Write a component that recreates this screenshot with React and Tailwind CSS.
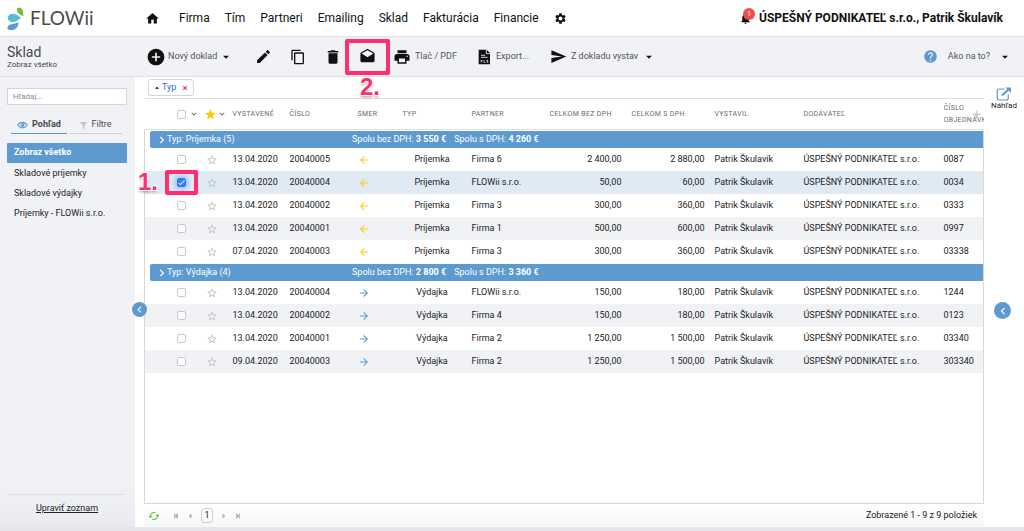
import React, { useState } from 'react';
import {
    MdHome, MdSettings, MdAddCircle, MdEdit, MdContentCopy, MdDelete, MdDrafts, MdPrint, MdSend,
    MdNotifications, MdHelp, MdStar, MdStarBorder, MdArrowBack, MdArrowForward, MdArrowDropDown,
    MdArrowDropUp, MdChevronLeft, MdCheck, MdKeyboardArrowDown, MdLoop,
} from 'react-icons/md';
import { FaFilter, FaChevronRight, FaStepBackward, FaStepForward, FaCaretLeft, FaCaretRight, FaTimes, FaPlus } from 'react-icons/fa';

const NAV = ['Firma', 'Tím', 'Partneri', 'Emailing', 'Sklad', 'Fakturácia', 'Financie'];

const VIEWS = ['Zobraz všetko', 'Skladové príjemky', 'Skladové výdajky', 'Príjemky - FLOWii s.r.o.'];

const GROUPS = [
    {
        title: 'Typ: Príjemka (5)',
        type: 'Príjemka',
        net: '3 550 €',
        gross: '4 260 €',
        rows: [
            ['13.04.2020', '20040005', 'Firma 6', '2 400,00', '2 880,00', '0087'],
            ['13.04.2020', '20040004', 'FLOWii s.r.o.', '50,00', '60,00', '0034'],
            ['13.04.2020', '20040002', 'Firma 3', '300,00', '360,00', '0333'],
            ['13.04.2020', '20040001', 'Firma 1', '500,00', '600,00', '0997'],
            ['07.04.2020', '20040003', 'Firma 3', '300,00', '360,00', '03338'],
        ],
    },
    {
        title: 'Typ: Výdajka (4)',
        type: 'Výdajka',
        net: '2 800 €',
        gross: '3 360 €',
        rows: [
            ['13.04.2020', '20040004', 'FLOWii s.r.o.', '150,00', '180,00', '1244'],
            ['13.04.2020', '20040002', 'Firma 4', '150,00', '180,00', '0123'],
            ['13.04.2020', '20040001', 'Firma 2', '1 250,00', '1 500,00', '03340'],
            ['09.04.2020', '20040003', 'Firma 2', '1 250,00', '1 500,00', '303340'],
        ],
    },
];

const Logo = () => (
    <a href="#" className="flex items-center gap-[5px] text-[#4a4a4c]">
        <svg width="18" height="24" viewBox="0 0 18 24">
            <path d="M10.300 2.200C12 .8 14.500 1.200 15.500 4c.7 2.200.8 4.500 1 6.300C13.500 8.800 8.500 6.200 10.300 2.200z" fill="#6abf3b" />
            <path d="M.6 11.500C1.500 8 5.500 6.600 9 8.600c2 1.200 3.500 2.300 5.400 3.400-2.800 1.200-4.600 3.400-7.400 4C3.500 16.700 1 14.800.6 11.500z" fill="#57bccf" />
            <path d="M.4 22.500c0-2.800 1.500-4 4-4.300 2.200-.3 4.500-.6 7-2.200 0 2.300-.5 4.500-1.800 6-1.500 1.600-3.300 2-5.200 2-1.500 0-4-.3-4-1.500z" fill="#5c9ad0" />
        </svg>
        <span className="font-[Lato,sans-serif] text-[19px] leading-6">FLOWii</span>
    </a>
);

const Callout = ({ box, label, text }) => (
    <>
        <span className={`absolute border-4 border-[#fe2e6f] rounded-[2px] pointer-events-none z-10 ${box}`} />
        <span
            className={`absolute z-10 pointer-events-none font-['Liberation_Sans',sans-serif] font-bold text-[24px] leading-5 text-[#fe2e6f] [text-shadow:1px_1px_0_#fff,-1px_1px_0_#fff,1px_-1px_0_#fff,-1px_-1px_0_#fff,0_2px_3px_#999] ${label}`}
        >
            {text}
        </span>
    </>
);

const ToolButton = ({ icon: Icon, size = 17, children, caret, className = '' }) => (
    <button type="button" className={`relative flex items-center gap-1 text-[9px] text-[#55565a] whitespace-nowrap ${className}`}>
        <Icon size={size} color="#111" className="shrink-0" />
        {children}
        {caret && <MdArrowDropDown size={14} color="#111" className="shrink-0" />}
    </button>
);

const XlsIcon = ({ size, className }) => (
    <svg width={size} height={size} viewBox="0 0 24 24" className={className}>
        <path d="M4 1h12l5 5v17H4z" fill="#111" />
        <path d="M15.500 1.500V7H21M7.500 9.500h6M7.500 12.500h10" stroke="#f1f2f6" strokeWidth="1.300" fill="none" />
        <path d="M7 16.500l2.500 3.500m0-3.500L7 20M12 16.500V20h2M18 16.800h-1.800v1.500H18V20h-2" stroke="#f1f2f6" strokeWidth="1" fill="none" />
    </svg>
);

const EyeIcon = () => (
    <svg width="11" height="8" viewBox="0 0 22 16" fill="none">
        <path d="M1.500 8C6 .5 16 .5 20.500 8 16 15.500 6 15.500 1.500 8z" stroke="#5c9ad0" strokeWidth="2.200" />
        <circle cx="11" cy="7.500" r="4.300" fill="#5c9ad0" />
        <circle cx="9.800" cy="6" r="1.400" fill="#f1f2f6" />
    </svg>
);

const PreviewIcon = () => (
    <svg width="16" height="14" viewBox="0 0 32 28" fill="none" stroke="#5c9ad0">
        <path d="M17 4H6a3.500 3.500 0 0 0-3.500 3.500v15A3.500 3.500 0 0 0 6 26h15a3.500 3.500 0 0 0 3.500-3.500V15" strokeWidth="2.400" />
        <path d="M12 17L26 4" strokeWidth="4" />
        <path d="M19 1h11v11z" fill="#5c9ad0" stroke="none" />
    </svg>
);

const CheckBox = ({ checked, onChange, label }) => (
    <span className={`relative flex w-[9px] h-[9px] ${checked ? 'shadow-[0_0_4px_3px_#a9cdf8] rounded-[2px]' : ''}`}>
        <input
            type="checkbox"
            aria-label={label}
            checked={checked}
            onChange={onChange}
            className="appearance-none w-[9px] h-[9px] rounded-[2px] border border-[#c9c9cc] bg-white checked:bg-[#2f7cf6] checked:border-[#2f7cf6]"
        />
        {checked && <MdCheck size={9} color="#fff" className="absolute inset-0 pointer-events-none" />}
    </span>
);

const Header = () => (
    <header className="flex items-center h-9 pl-[7px] pr-[21px] bg-white">
        <div className="w-[138px] shrink-0"><Logo /></div>
        <nav className="flex items-center gap-[15px] text-[12px] text-[#111]">
            <a href="#" aria-label="Domov" className="mr-1"><MdHome size={15} /></a>
            {NAV.map((item) => <a key={item} href="#">{item}</a>)}
            <a href="#" aria-label="Nastavenia"><MdSettings size={13} /></a>
        </nav>
        <div className="flex items-center gap-1 ml-auto">
            <button type="button" aria-label="Upozornenia" className="relative w-4">
                <MdNotifications size={13} color="#111" />
                <span className="absolute -top-1 left-1 w-3 h-3 rounded-full bg-[#ee4e4e] text-white text-[8px] leading-3 text-center">1</span>
            </button>
            <a href="#" className="text-[12px] font-bold text-[#111]">ÚSPEŠNÝ PODNIKATEĽ s.r.o., Patrik Škulavík</a>
        </div>
    </header>
);

const Toolbar = () => (
    <div className="flex items-center h-[41px] pl-[7px] pr-[12px] bg-[#f1f2f6] border-y border-[#e2e0e3]">
        <div className="w-[139px] shrink-0 text-[#4a4a4c]">
            <h1 className="text-[14px] leading-4">Sklad</h1>
            <p className="text-[8px] leading-[9px]">Zobraz všetko</p>
        </div>
        <ToolButton icon={MdAddCircle} size={20} caret className="w-[109px] gap-[2px]">Nový doklad</ToolButton>
        <ToolButton icon={MdEdit} className="w-[35px]" />
        <ToolButton icon={MdContentCopy} size={16} className="w-[34px]" />
        <ToolButton icon={MdDelete} size={18} className="w-[35px]" />
        <ToolButton icon={MdDrafts} className="w-[34px]">
            <Callout box="-left-[14px] -top-[9px] w-[45px] h-[36px]" label="left-px top-[29px]" text="2." />
        </ToolButton>
        <ToolButton icon={MdPrint} size={18} className="w-[83px]">Tlač / PDF</ToolButton>
        <ToolButton icon={XlsIcon} size={16} className="w-[74px]">Export...</ToolButton>
        <ToolButton icon={MdSend} caret>Z dokladu vystav</ToolButton>
        <button type="button" className="flex items-center ml-auto text-[9px] text-[#55565a]">
            <MdHelp size={15} color="#5c9ad0" className="mr-[10px]" />
            Ako na to?
            <MdArrowDropDown size={14} color="#111" className="ml-2" />
        </button>
    </div>
);

const Sidebar = ({ view, setView }) => (
    <aside className="flex flex-col w-[135px] shrink-0 px-[7px] pt-[11px] pb-[13px] bg-gradient-to-b from-[#f1f2f6] from-90% to-[#e9ebf0]">
        <input
            type="search"
            aria-label="Hľadaj"
            placeholder="Hľadaj..."
            className="h-[17px] w-[120px] px-[5px] bg-white border border-[#d4d5d8] text-[8px] placeholder:text-[#8a8a8c]"
        />
        <div className="flex gap-[3px] mt-3 text-[9px] text-[#4a4a4c]">
            <button type="button" className="flex items-center justify-center gap-1 w-[56px] h-[17px] ml-1 border-b border-[#5c9ad0] font-bold">
                <EyeIcon />Pohľad
            </button>
            <button type="button" className="flex items-center justify-center gap-1 w-[52px] h-[17px] border-b border-[#cfcfd2]">
                <FaFilter size={7} color="#c4c4c6" />Filtre
            </button>
        </div>
        <ul className="mt-[9px] w-[120px] text-[9px] text-[#222]">
            {VIEWS.map((item) => (
                <li key={item}>
                    <button
                        type="button"
                        onClick={() => setView(item)}
                        className={`block w-full px-[7px] text-left whitespace-nowrap ${item === view ? 'h-5 mb-px bg-[#5c9ad0] text-white font-bold rounded-[1px]' : 'h-5'}`}
                    >
                        {item}
                    </button>
                </li>
            ))}
        </ul>
        <div className="mt-auto mx-[2px] w-[116px] pt-[7px] border-t border-[#dcdde1] text-center text-[9px] leading-3">
            <a href="#" className="underline text-[#222]">Upraviť zoznam</a>
        </div>
    </aside>
);

const GroupRow = ({ group }) => (
    <tr className="h-[18px]">
        <td colSpan={12} className="p-0">
            <div className="flex items-center h-[17px] mt-px ml-[5px] pl-2 bg-[#5c9ad0] text-white rounded-l-[2px]">
                <FaChevronRight size={8} className="mr-px" />
                <span className="w-[185px]">{group.title}</span>
                <span className="mr-2">Spolu bez DPH: <b>{group.net}</b></span>
                <span>Spolu s DPH: <b>{group.gross}</b></span>
            </div>
        </td>
    </tr>
);

const DocumentTable = () => {
    const [selected, setSelected] = useState(['0-1']);

    const toggle = (id) => {
        setSelected(selected.includes(id) ? selected.filter((s) => s !== id) : [...selected, id]);
    };

    return (
        <table className="w-full table-fixed border-collapse text-[9px] text-[#222] whitespace-nowrap text-left">
            <colgroup>
                <col className="w-[59px]" />
                <col className="w-[29px]" />
                <col className="w-[57px]" />
                <col className="w-[68px]" />
                <col className="w-[35px]" />
                <col className="w-[79px]" />
                <col className="w-[78px]" />
                <col className="w-[72px]" />
                <col className="w-[83px]" />
                <col className="w-[99px]" />
                <col className="w-[140px]" />
                <col />
            </colgroup>
            <thead>
                <tr className="h-[31px] border-y border-[#dedede] text-[7px] text-[#6a6a6c] tracking-wider [&>th]:font-normal [&>th]:p-0">
                    <th>
                        <span className="flex items-center gap-[3px] pl-[32px]">
                            <CheckBox label="Označiť všetko" checked={false} onChange={() => setSelected([])} />
                            <MdKeyboardArrowDown size={10} />
                        </span>
                    </th>
                    <th>
                        <span className="flex items-center">
                            <MdStar size={13} color="#fdcb0a" className="shrink-0" />
                            <MdKeyboardArrowDown size={10} className="shrink-0" />
                        </span>
                    </th>
                    <th>VYSTAVENÉ</th>
                    <th>ČÍSLO</th>
                    <th>SMER</th>
                    <th><span className="pl-[10px]">TYP</span></th>
                    <th>PARTNER</th>
                    <th>CELKOM BEZ DPH</th>
                    <th><span className="pl-[10px]">CELKOM S DPH</span></th>
                    <th><span className="pl-[10px]">VYSTAVIL</span></th>
                    <th>DODÁVATEĽ</th>
                    <th>
                        <div className="relative overflow-hidden leading-3">
                            <FaPlus size={9} color="#c9c9c9" className="absolute right-[3px] top-[8px]" />
                            <span className="relative">ČÍSLO<br />OBJEDNÁVKY</span>
                        </div>
                    </th>
                </tr>
            </thead>
            {GROUPS.map((group, g) => (
                <tbody key={group.title} className="border-x border-[#d8d8da]">
                    <GroupRow group={group} />
                    {group.rows.map(([date, number, partner, net, gross, order], i) => {
                        const id = `${g}-${i}`;
                        const isSelected = selected.includes(id);
                        const stripe = i % 2 ? 'bg-[#f1f2f6]' : 'bg-white';
                        return (
                            <tr key={id} className={`h-[23px] [&>td]:p-0 ${isSelected ? 'bg-[#e0eaf5]' : stripe}`}>
                                <td>
                                    <div className="relative pl-[32px]">
                                        <CheckBox label={`Doklad ${number}`} checked={isSelected} onChange={() => toggle(id)} />
                                        {id === '0-1' && (
                                            <Callout box="left-[20px] -top-[8px] w-[33px] h-[25px]" label="-left-[7px] -top-[6px]" text="1." />
                                        )}
                                    </div>
                                </td>
                                <td><MdStarBorder size={12} color="#c2c2c6" className="ml-[2px]" /></td>
                                <td>{date}</td>
                                <td>{number}</td>
                                <td>
                                    {g === 0
                                        ? <MdArrowBack size={12} color="#fdcb0a" />
                                        : <MdArrowForward size={12} color="#5c9ad0" />}
                                </td>
                                <td className="text-center">{group.type}</td>
                                <td>{partner}</td>
                                <td className="text-right">{net}</td>
                                <td className="text-right">{gross}</td>
                                <td><span className="pl-[10px]">Patrik Škulavík</span></td>
                                <td>ÚSPEŠNÝ PODNIKATEĽ s.r.o.</td>
                                <td>{order}</td>
                            </tr>
                        );
                    })}
                </tbody>
            ))}
        </table>
    );
};

const Pager = () => (
    <footer className="flex items-center h-[23px] pl-[4px] pr-[7px] text-[9px] text-[#222] bg-gradient-to-b from-white to-[#f6f6f7]">
        <button type="button" aria-label="Obnoviť"><MdLoop size={12} color="#5fbf35" className="rotate-90" /></button>
        <div className="flex items-center gap-[7px] ml-[13px] text-[#b0b0b3]">
            <button type="button" aria-label="Prvá"><FaStepBackward size={6} /></button>
            <button type="button" aria-label="Predošlá"><FaCaretLeft size={8} /></button>
            <button type="button" className="w-3 h-[15px] border border-[#cfcfd2] rounded-[3px] text-[#222]">1</button>
            <button type="button" aria-label="Ďalšia"><FaCaretRight size={8} /></button>
            <button type="button" aria-label="Posledná"><FaStepForward size={6} /></button>
        </div>
        <span className="ml-auto">Zobrazené 1 - 9 z 9 položiek</span>
    </footer>
);

const App = () => {
    const [view, setView] = useState(VIEWS[0]);

    return (
        <div className="flex flex-col min-h-screen bg-white font-[Roboto,sans-serif]">
            <Header />
            <Toolbar />
            <div className="flex flex-1">
                <Sidebar view={view} setView={setView} />
                <main className="relative flex flex-col flex-1 min-w-0 pl-[9px]">
                    <div className="flex items-center h-[21px]">
                        <button type="button" className="flex items-center h-[17px] w-[46px] ml-1 px-[3px] border border-[#d4d5d8] rounded-[3px] text-[9px] text-[#2a6fdb]">
                            <MdArrowDropUp size={10} color="#111" />Typ
                            <FaTimes size={6} color="#e23b3b" className="ml-auto mr-[2px]" />
                        </button>
                    </div>
                    <DocumentTable />
                    <div className="flex-1 border-x border-b border-[#d8d8da]" />
                    <Pager />
                    <button
                        type="button"
                        aria-label="Skryť panel"
                        className="absolute -left-[3px] top-[225px] flex items-center justify-center w-[15px] h-[15px] rounded-full bg-[#5c9ad0] text-white"
                    >
                        <MdChevronLeft size={13} />
                    </button>
                </main>
                <aside className="flex flex-col items-center w-10 shrink-0 pt-[10px]">
                    <button type="button" className="flex flex-col items-center text-[8px] leading-[9px] text-[#222]">
                        <PreviewIcon />Náhľad
                    </button>
                    <button
                        type="button"
                        aria-label="Zobraziť náhľad"
                        className="flex items-center justify-center w-[17px] h-[17px] mt-[192px] mr-[3px] rounded-full bg-[#5c9ad0] text-white"
                    >
                        <MdChevronLeft size={14} />
                    </button>
                </aside>
            </div>
            <div className="h-1 bg-[#e4e6ec]" />
        </div>
    );
};

export default App;
